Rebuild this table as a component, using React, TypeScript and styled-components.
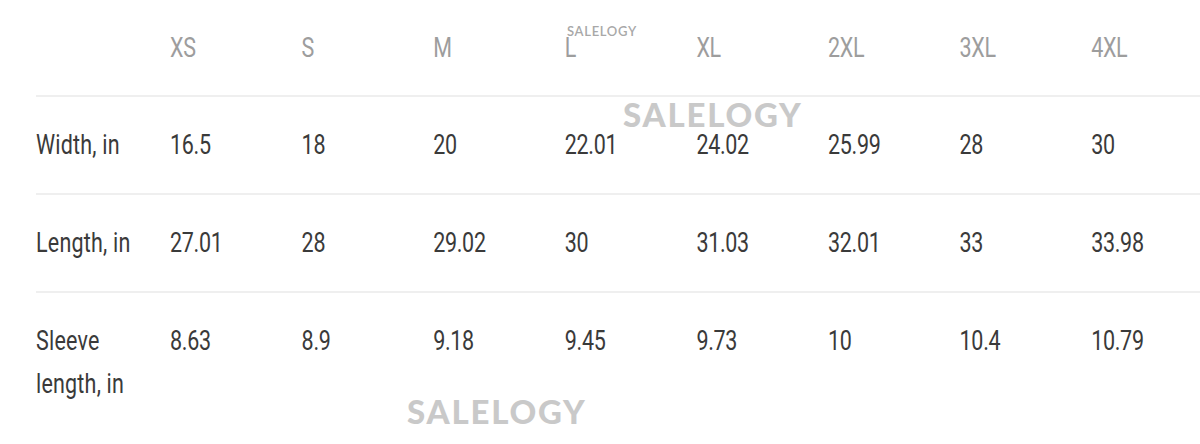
import React, { FC } from 'react';
import styled, { createGlobalStyle } from 'styled-components';

const sizes = ['XS', 'S', 'M', 'L', 'XL', '2XL', '3XL', '4XL'];

const rows: { label: string[]; values: string[] }[] = [
  { label: ['Width, in'], values: ['16.5', '18', '20', '22.01', '24.02', '25.99', '28', '30'] },
  { label: ['Length, in'], values: ['27.01', '28', '29.02', '30', '31.03', '32.01', '33', '33.98'] },
  {
    label: ['Sleeve', 'length, in'],
    values: ['8.63', '8.9', '9.18', '9.45', '9.73', '10', '10.4', '10.79'],
  },
];

const App: FC = () => {
  return (
    <>
      <GlobalStyle />
      <Page>
        <Table>
          <Row $height={95}>
            <Cell />
            {sizes.map((size) => (
              <Cell key={size}>
                <Text $muted>{size}</Text>
              </Cell>
            ))}
          </Row>
          {rows.map((row, i) => (
            <Row key={row.label.join(' ')} $height={96} $last={i === rows.length - 1}>
              <Cell>
                <Text $label>
                  {row.label.map((line) => (
                    <Line key={line}>{line}</Line>
                  ))}
                </Text>
              </Cell>
              {row.values.map((value, j) => (
                <Cell key={j}>
                  <Text>{value}</Text>
                </Cell>
              ))}
            </Row>
          ))}
        </Table>
        <SmallMark>SALELOGY</SmallMark>
        <BigMark $left={623} $top={94}>SALELOGY</BigMark>
        <BigMark $left={407} $top={391}>SALELOGY</BigMark>
      </Page>
    </>
  );
};

export default App;

const GlobalStyle = createGlobalStyle`
  html, body {
    margin: 0;
    padding: 0;
    background: #fff;
  }
  body {
    font-family: Roboto, "Liberation Sans", Arial, sans-serif;
  }
`;
const Page = styled.div`
  position: relative;
  width: 1200px;
  height: 444px;
  overflow: hidden;
  background: #fff;
`;
const Table = styled.div`
  margin-left: 36px;
  display: flex;
  flex-direction: column;
`;
const Row = styled.div<{ $height: number; $last?: boolean }>`
  display: grid;
  grid-template-columns: 134px repeat(7, 131.6px) 1fr;
  min-height: ${({ $height }) => $height}px;
  border-bottom: ${({ $last }) => ($last ? 'none' : '2px solid #efefef')};
`;
const Cell = styled.div`
  padding-top: 26px;
`;
const Text = styled.div<{ $muted?: boolean; $label?: boolean }>`
  display: inline-block;
  font-size: 21.5px;
  line-height: 34px;
  color: ${({ $muted }) => ($muted ? '#9d9d9d' : '#3a3a3a')};
  transform: scaleY(1.28);
  transform-origin: 0 0;
  letter-spacing: ${({ $label }) => ($label ? '0.2px' : '-0.3px')};
`;
const Line = styled.div`
  white-space: nowrap;
`;
const SmallMark = styled.div`
  position: absolute;
  left: 567px;
  top: 23px;
  font-family: Lato, "Open Sans", sans-serif;
  font-weight: 600;
  font-size: 13px;
  letter-spacing: 0.7px;
  color: #a8a8a8;
`;
const BigMark = styled.div<{ $left: number; $top: number }>`
  position: absolute;
  left: ${({ $left }) => $left}px;
  top: ${({ $top }) => $top}px;
  font-family: Lato, "Open Sans", sans-serif;
  font-weight: 900;
  font-size: 33px;
  line-height: 40px;
  letter-spacing: 1.8px;
  color: #c9c9c9;
`;
